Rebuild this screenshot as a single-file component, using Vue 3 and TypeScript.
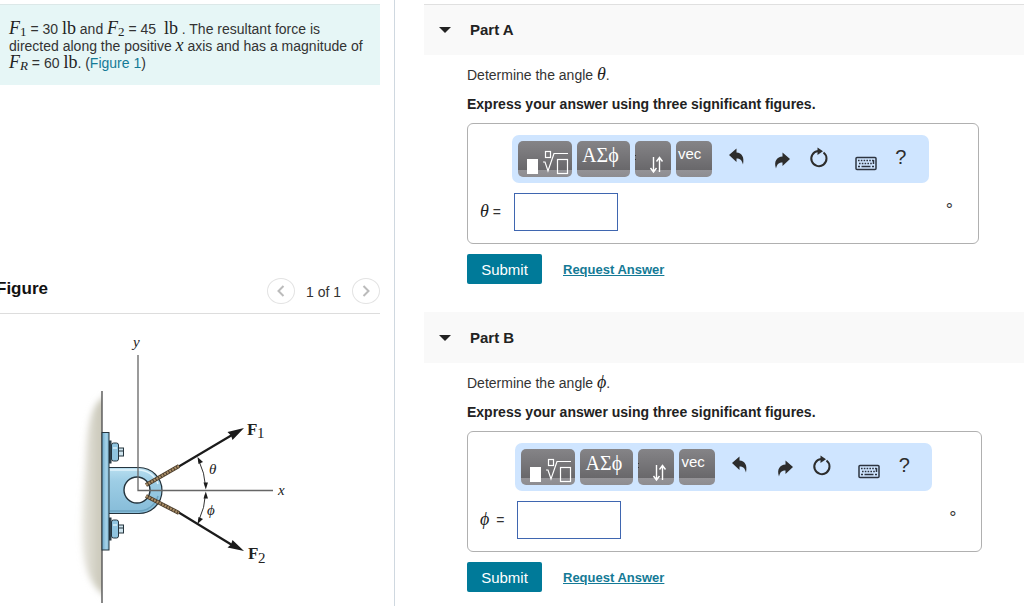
<script setup lang="ts">
import { ref } from 'vue'

interface Part {
  id: string
  title: string
  symbol: string
  answer: string
}

const parts = ref<Part[]>([
  { id: 'a', title: 'Part A', symbol: 'θ', answer: '' },
  { id: 'b', title: 'Part B', symbol: 'ϕ', answer: '' },
])
</script>

<template>
  <div class="page">
    <aside class="left">
      <section class="problem">
        <var>F</var><sub>1</sub> = 30 <span class="unit">lb</span> and <var>F</var><sub>2</sub> = 45 &nbsp;<span class="unit">lb</span> . The resultant force is directed along the positive <var>x</var> axis and has a magnitude of
        <var>F</var><sub><i>R</i></sub> = 60 <span class="unit">lb</span>. (<a href="#figure">Figure 1</a>)
      </section>

      <header id="figure" class="figure-head">
        <h2>Figure</h2>
        <div class="pager">
          <button type="button" class="round" aria-label="Previous figure">
            <svg width="8" height="12" viewBox="0 0 8 12"><path d="M6.5 1 1.5 6l5 5" fill="none" stroke="#bbb" stroke-width="2" /></svg>
          </button>
          <span>1 of 1</span>
          <button type="button" class="round" aria-label="Next figure">
            <svg width="8" height="12" viewBox="0 0 8 12"><path d="M1.5 1l5 5-5 5" fill="none" stroke="#bbb" stroke-width="2" /></svg>
          </button>
        </div>
      </header>

      <svg class="diagram" viewBox="0 314 380 290" role="img" aria-label="Bracket on a wall pulled by two forces">
        <defs>
          <linearGradient id="wall" x1="0" x2="1" y1="0" y2="0">
            <stop offset="0" stop-color="#d3d1c4" stop-opacity="0.5" />
            <stop offset="0.6" stop-color="#cdcbbd" />
            <stop offset="1" stop-color="#c8c6b8" />
          </linearGradient>
          <linearGradient id="steel" x1="0" x2="0" y1="0" y2="1">
            <stop offset="0" stop-color="#b9dff0" />
            <stop offset="0.3" stop-color="#9dcde5" />
            <stop offset="1" stop-color="#86bcd8" />
          </linearGradient>
          <linearGradient id="plate" x1="0" x2="1" y1="0" y2="0">
            <stop offset="0" stop-color="#6da9cb" />
            <stop offset="0.6" stop-color="#a6d3e9" />
            <stop offset="1" stop-color="#7fb7d3" />
          </linearGradient>
          <filter id="soft" x="-50%" y="-20%" width="200%" height="140%"><feGaussianBlur stdDeviation="3" /></filter>
          <clipPath id="wallclip"><rect x="60" y="370" width="42" height="236" /></clipPath>
        </defs>
        <g clip-path="url(#wallclip)">
          <path d="M110 394C92 400 88 420 86 450C84 485 81 510 82 540C83 570 92 590 110 598Z" fill="url(#wall)" filter="url(#soft)" />
        </g>
        <path d="M102 391V603" stroke="#555" stroke-width="1.4" />

        <path d="M108 467.500H139A23 23 0 0 1 139 513.500H108Z" fill="url(#steel)" stroke="#25343d" stroke-width="1.2" />
        <path d="M110 470H138A20.500 20.500 0 0 1 158 484" fill="none" stroke="#e2f4fb" stroke-width="1.500" />
        <path d="M158 496A20 20 0 0 1 138 511H110" fill="none" stroke="#6ca4c1" stroke-width="1.500" />
        <rect x="102" y="432.500" width="7" height="117.500" fill="url(#plate)" stroke="#25343d" />
        <g v-for="y in [452, 529]" :key="y" stroke="#25343d">
          <rect x="109.500" :y="y - 11" width="1.500" height="22" fill="#39515f" />
          <rect x="111.500" :y="y - 9" width="7" height="18" rx="2" fill="#8fc4df" />
          <path :d="`M113 ${y - 4}h4`" stroke="#d8f0fa" stroke-width="1.500" />
          <rect x="118.500" :y="y - 4" width="5" height="8" fill="#cfe4ee" />
          <path :d="`M119 ${y - 1}h4`" />
        </g>
        <circle cx="137" cy="490" r="13" fill="#fff" stroke="#25343d" stroke-width="1.400" />

        <path d="M138 355V490.500H273" fill="none" stroke="#666" stroke-width="1.300" />
        <g fill="none">
          <path d="M178 467 232 435M178 512 232 545" stroke="#1b1b1b" stroke-width="2.200" />
          <path d="M146 485 179 466M146 496 179 513" stroke="#4b3d2c" stroke-width="4" />
          <path d="M146 485 179 466M146 496 179 513" stroke="#a98d66" stroke-width="2.400" stroke-dasharray="2 1" />
          <path d="M199 461A68 68 0 0 1 205.500 486M205.500 494A68 68 0 0 1 199 520" stroke="#333" stroke-width="1" />
        </g>
        <g fill="#1b1b1b">
          <path d="M244 428 232.500 440 231 435.500 227.500 432Z" />
          <path d="M244 551 227.500 547.500 231 544.500 232.500 540Z" />
          <path d="M197.500 457 203 462 198.500 464Z" />
          <path d="M205.800 489.500 203.500 482.500 208 482.500Z" />
          <path d="M205.800 491.500 203.500 498.500 208 498.500Z" />
          <path d="M197.500 524 198.500 517 203 519Z" />
        </g>
        <g class="labels">
          <text x="133" y="347" font-style="italic">y</text>
          <text x="278" y="495" font-style="italic">x</text>
          <text x="209" y="474" font-style="italic">θ</text>
          <text x="207" y="515" font-style="italic">ϕ</text>
          <text x="247" y="435" font-weight="bold" class="force">F</text>
          <text x="257" y="438">1</text>
          <text x="248" y="559" font-weight="bold" class="force">F</text>
          <text x="258" y="563">2</text>
        </g>
      </svg>
    </aside>

    <main class="right">
      <section v-for="part in parts" :key="part.id" class="part">
        <header class="part-head">
          <svg width="12" height="6" viewBox="0 0 12 6" aria-hidden="true"><path d="M0 0H12L6 6Z" fill="#222" /></svg>
          <h2>{{ part.title }}</h2>
        </header>
        <div class="part-body">
          <p>Determine the angle <var>{{ part.symbol }}</var>.</p>
          <p class="strong">Express your answer using three significant figures.</p>

          <div class="answer">
            <label :for="`answer-${part.id}`"><var>{{ part.symbol }}</var> =</label>
            <div class="entry">
              <div class="toolbar">
                <button type="button" class="key templates" aria-label="Templates">
                  <svg width="54" height="36" viewBox="0 0 54 36">
                    <rect x="9" y="18" width="11" height="15" fill="#fff" />
                    <g fill="none" stroke="#fff" stroke-width="1.200">
                      <rect x="27.500" y="10.500" width="5" height="6" />
                      <path d="M25 21h2l3 9 6-17.500h14" />
                      <rect x="39.500" y="18.500" width="10" height="14" />
                    </g>
                  </svg>
                </button>
                <button type="button" class="key greek">ΑΣϕ</button>
                <button type="button" class="key" aria-label="Arrows">
                  <svg width="36" height="36" viewBox="0 0 36 36">
                    <path d="M18.500 16v14M15.500 27l3 4 3-4M24.500 31V17M21.500 20.500l3-4 3 4" fill="none" stroke="#fff" stroke-width="1.400" />
                    <path d="M0 14h1v1H0zM0 18h1v1H0z" fill="#333" />
                  </svg>
                </button>
                <button type="button" class="key vec">vec</button>
                <button type="button" class="tool undo" aria-label="Undo">
                  <svg width="22" height="36" viewBox="0 0 22 36"><path d="M3 14 10.500 7.500V11.500C16 12 18.500 16 17 23.500C15.800 19 14 17.500 10.500 17.500V21Z" fill="#2d2d2d" /></svg>
                </button>
                <button type="button" class="tool redo" aria-label="Redo">
                  <svg width="22" height="36" viewBox="0 0 22 36"><path d="M19 18 11.500 11.500V15.500C6 16 2.500 20 5 27.500C6 23 8 21.500 11.500 21.500V25Z" fill="#2d2d2d" /></svg>
                </button>
                <button type="button" class="tool reset" aria-label="Reset">
                  <svg width="22" height="36" viewBox="0 0 22 36">
                    <path d="M15.500 11.500A7.600 7.600 0 1 1 10 10" fill="none" stroke="#2d2d2d" stroke-width="2" />
                    <path d="M9.500 6.500 15 10.300 9.500 14Z" fill="#2d2d2d" />
                  </svg>
                </button>
                <button type="button" class="tool keyboard" aria-label="Keyboard shortcuts">
                  <svg width="22" height="36" viewBox="0 0 22 36" fill="none" stroke="#2d3440">
                    <rect x="1" y="16.500" width="20" height="12" rx="1" stroke-width="1.500" />
                    <path d="M3 19.500h16M4 22.500h14" stroke-width="1.600" stroke-dasharray="1.600 1.200" />
                    <path d="M3 25.500h2M6.500 25.500h9M17 25.500h2M18.500 19v4" stroke-width="1.500" />
                  </svg>
                </button>
                <button type="button" class="tool help" aria-label="Help">?</button>
              </div>
              <div class="value">
                <input :id="`answer-${part.id}`" v-model="part.answer" type="text" />
                <span class="degree">°</span>
              </div>
            </div>
          </div>

          <div class="actions">
            <button type="button" class="submit">Submit</button>
            <a href="#request">Request Answer</a>
          </div>
        </div>
      </section>
    </main>
  </div>
</template>

<style>
body {
  margin: 0;
  background: #fff;
}
</style>

<style scoped>
.page {
  display: grid;
  grid-template-columns: minmax(0, 395fr) minmax(0, 629fr);
  min-height: 100vh;
  font-family: "Liberation Sans", Arial, sans-serif;
  font-size: 14px;
  color: #333;
  overflow: hidden;
}
h2, p {
  margin: 0;
}
button {
  padding: 0;
  border: 0;
  font-family: inherit;
  cursor: pointer;
}
svg {
  display: block;
}
var, .unit, sub {
  font-family: "Liberation Serif", "DejaVu Serif", serif;
  color: #222;
}
var, .unit {
  font-size: 18px;
  line-height: 1px;
}
sub {
  font-size: 13px;
  line-height: 1px;
  vertical-align: -2px;
}
a {
  color: #147a96;
}

.left {
  border-right: 1px solid #cfd8e0;
  padding: 4px 14px 0 0;
}
.problem {
  box-sizing: border-box;
  min-height: 81px;
  padding: 16px 9px 12px;
  background: #e6f6f6;
  border-top: 1px solid #dce8e8;
  line-height: 17px;
}
.problem a {
  text-decoration: none;
}
.figure-head {
  display: flex;
  align-items: center;
  justify-content: space-between;
  height: 44px;
  margin-top: 184px;
  border-bottom: 1px solid #ddd;
}
.figure-head h2 {
  margin-left: -4px;
  padding-bottom: 4px;
  font-size: 17px;
  line-height: 20px;
  color: #111;
}
.pager {
  display: flex;
  align-items: center;
  gap: 11px;
}
.pager span {
  padding-top: 2px;
  line-height: 20px;
}
.round {
  display: grid;
  place-items: center;
  width: 28px;
  height: 26px;
  border: 1px solid #e3e3e3;
  border-radius: 50%;
  background: #fff;
}
.diagram {
  width: 100%;
}
.labels {
  font-family: "Liberation Serif", "DejaVu Serif", serif;
  font-size: 15px;
  fill: #222;
}
.force {
  font-size: 17px;
}

.right {
  padding: 4px 0 0 29px;
}
.part {
  margin-bottom: 28px;
}
.part-head {
  display: flex;
  align-items: center;
  gap: 19px;
  box-sizing: border-box;
  height: 51px;
  padding-left: 15px;
  background: #f9f9f9;
}
.part:first-child .part-head {
  border-top: 1px solid #e0e0e0;
}
.part-head h2 {
  font-size: 15px;
  line-height: 20px;
  color: #222;
}
.part-body {
  padding: 10px 0 0 43px;
}
.part-body p {
  line-height: 20px;
  margin-bottom: 9px;
}
.part-body .strong {
  font-weight: bold;
  color: #222;
}
.answer {
  display: flex;
  width: fit-content;
  padding: 11px 49px 12px 12px;
  border: 1px solid #b0b0b0;
  border-radius: 6px;
  gap: 11px;
}
.answer label {
  align-self: flex-end;
  line-height: 38px;
  white-space: nowrap;
}
.part + .part label var {
  margin-right: 3px;
}
.toolbar {
  display: flex;
  gap: 5px;
  box-sizing: border-box;
  width: 417px;
  height: 48px;
  padding: 6px;
  border-radius: 7px;
  background: #cfe5ff;
}
.key {
  width: 36px;
  height: 36px;
  border-radius: 5px;
  background: linear-gradient(#858487 0, #69686b 80%, #949397 81%, #8d8c90 100%);
  color: #fff;
  flex: none;
}
.templates {
  width: 54px;
}
.greek {
  width: 53px;
  padding: 0 6px 8px 0;
  font-family: "Liberation Serif", "DejaVu Serif", serif;
  font-size: 20px;
}
.vec {
  padding: 0 0 12px 2px;
  font-size: 15px;
  text-align: left;
}
.tool {
  width: 22px;
  background: none;
  color: #2d2d2d;
  flex: none;
}
.undo {
  margin-left: 9px;
}
.redo {
  margin-left: 18px;
}
.reset {
  margin-left: 10px;
}
.keyboard {
  margin-left: 20px;
}
.help {
  margin-left: 8px;
  padding-bottom: 4px;
  font-size: 20px;
}
.value {
  display: flex;
  align-items: center;
  margin: 10px 0 0 2px;
}
.value input {
  box-sizing: border-box;
  width: 104px;
  height: 38px;
  padding: 0 8px;
  border: 1px solid #3f66b0;
  background: #fff;
  font-size: 16px;
}
.degree {
  margin: 0 -24px 0 auto;
  padding-bottom: 4px;
  font-size: 18px;
  line-height: 20px;
}
.actions {
  display: flex;
  align-items: center;
  gap: 21px;
  margin-top: 10px;
}
.actions a {
  font-size: 13px;
  font-weight: bold;
}
.submit {
  width: 75px;
  height: 30px;
  border-radius: 2px;
  background: #007a99;
  color: #fff;
  font-size: 15px;
}
</style>
